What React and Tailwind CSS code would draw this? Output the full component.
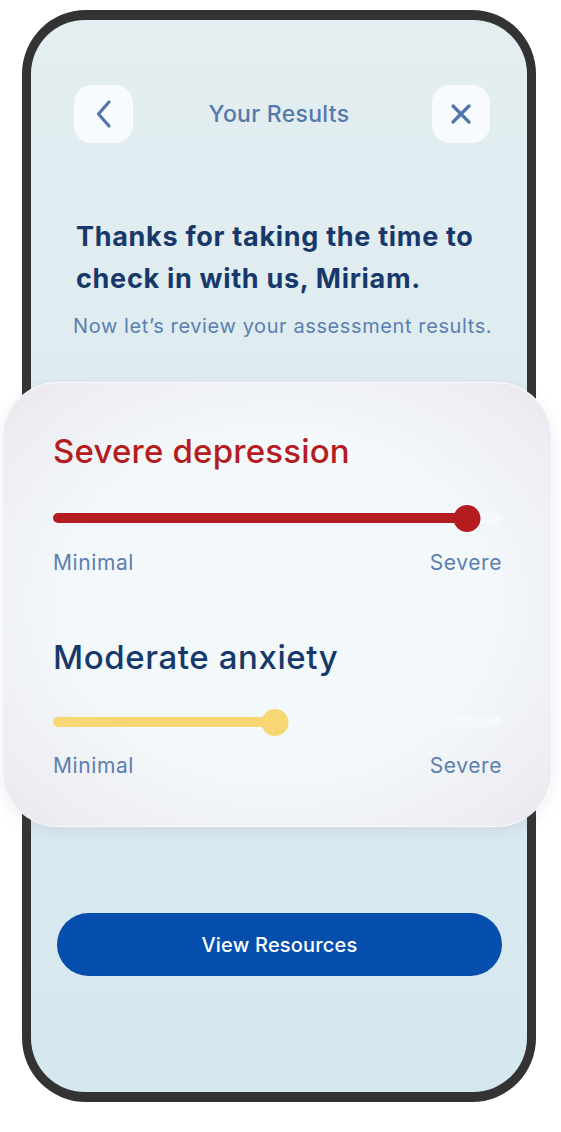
import React from "react";

function Slider({ pct, fill }) {
  return (
    <div className="relative h-[28px] flex items-center">
      <div className="w-full h-[10px] rounded-full bg-[#f6f9fb]" />
      <div
        className={`absolute left-0 h-[10px] rounded-full ${fill}`}
        style={{ width: `${pct}%` }}
      />
      <div
        className={`absolute w-[27px] h-[27px] rounded-full ${fill} -translate-x-1/2`}
        style={{ left: `${pct}%` }}
      />
    </div>
  );
}

export default function App() {
  const font = { fontFamily: "Inter, 'Noto Sans', sans-serif" };
  return (
    <div className="w-[561px] h-[1132px] bg-white pt-[10px] pl-[22px]" style={font}>
      <div className="w-[514px] h-[1092px] rounded-[64px] bg-[#333333] border-[#333333] border-x-[9px] border-y-[10px]">
        <div className="w-full h-full rounded-[54px] bg-gradient-to-b from-[#e4eef1] via-[#dbeaef] to-[#d6e8ef] flex flex-col">
          <div className="flex items-center justify-between pl-[43px] pr-[37px] pt-[65px]">
            <div className="w-[59px] h-[58px] rounded-[18px] bg-[#f8fbfd] flex items-center justify-center">
              <svg width="20" height="32" viewBox="0 0 20 32" fill="none">
                <path d="M15 4 L4.5 16 L15 28" stroke="#4f76aa" strokeWidth="3.2" strokeLinecap="round" strokeLinejoin="round" />
              </svg>
            </div>
            <div className="pr-[7px] text-[23px] font-medium text-[#5579ab] tracking-[0.3px]">Your Results</div>
            <div className="w-[58px] h-[58px] rounded-[18px] bg-[#f8fbfd] flex items-center justify-center">
              <svg width="24" height="24" viewBox="0 0 24 24" fill="none">
                <path d="M4 4 L20 20 M20 4 L4 20" stroke="#4f76aa" strokeWidth="3.2" strokeLinecap="round" />
              </svg>
            </div>
          </div>

          <div className="pl-[45px] pr-[20px] pt-[73px]">
            <h1 className="text-[27px] leading-[42px] font-bold text-[#17386a] tracking-[0.7px]">
              Thanks for taking the time to
              <br />
              check in with us, Miriam.
            </h1>
            <p className="mt-[13px] -ml-[3px] text-[20px] leading-[26px] text-[#5b7fb0] tracking-[0.6px] whitespace-nowrap">
              Now let’s review your assessment results.
            </p>
          </div>

          <div className="mt-[43px] -ml-[29px] -mr-[25px] h-[445px] rounded-[56px] border border-white/70 bg-[radial-gradient(ellipse_at_center,#f3f8fa_55%,#ebe8ef_100%)] shadow-[0_4px_14px_rgba(120,110,140,0.12)] pl-[50px] pr-[49px] pt-[48px]">
            <div className="text-[33px] leading-[40px] font-medium text-[#b51c1f] tracking-[0.2px]">Severe depression</div>
            <div className="mt-[33px]">
              <Slider pct={92.2} fill="bg-[#b51c1f]" />
            </div>
            <div className="mt-[18px] flex justify-between text-[21px] leading-[26px] text-[#5b7fb0] tracking-[0.6px]">
              <span>Minimal</span>
              <span>Severe</span>
            </div>
            <div className="mt-[61px] text-[33px] leading-[40px] font-medium text-[#17386a] tracking-[0.6px]">Moderate anxiety</div>
            <div className="mt-[31px]">
              <Slider pct={49.5} fill="bg-[#f6d774]" />
            </div>
            <div className="mt-[17px] flex justify-between text-[21px] leading-[26px] text-[#5b7fb0] tracking-[0.6px]">
              <span>Minimal</span>
              <span>Severe</span>
            </div>
          </div>

          <div className="mt-[86px] pl-[26px] pr-[25px]">
            <div className="h-[63px] rounded-full bg-[#054eae] flex items-center justify-center text-white text-[20px] font-medium tracking-[0.2px]">
              View Resources
            </div>
          </div>
        </div>
      </div>
    </div>
  );
}
